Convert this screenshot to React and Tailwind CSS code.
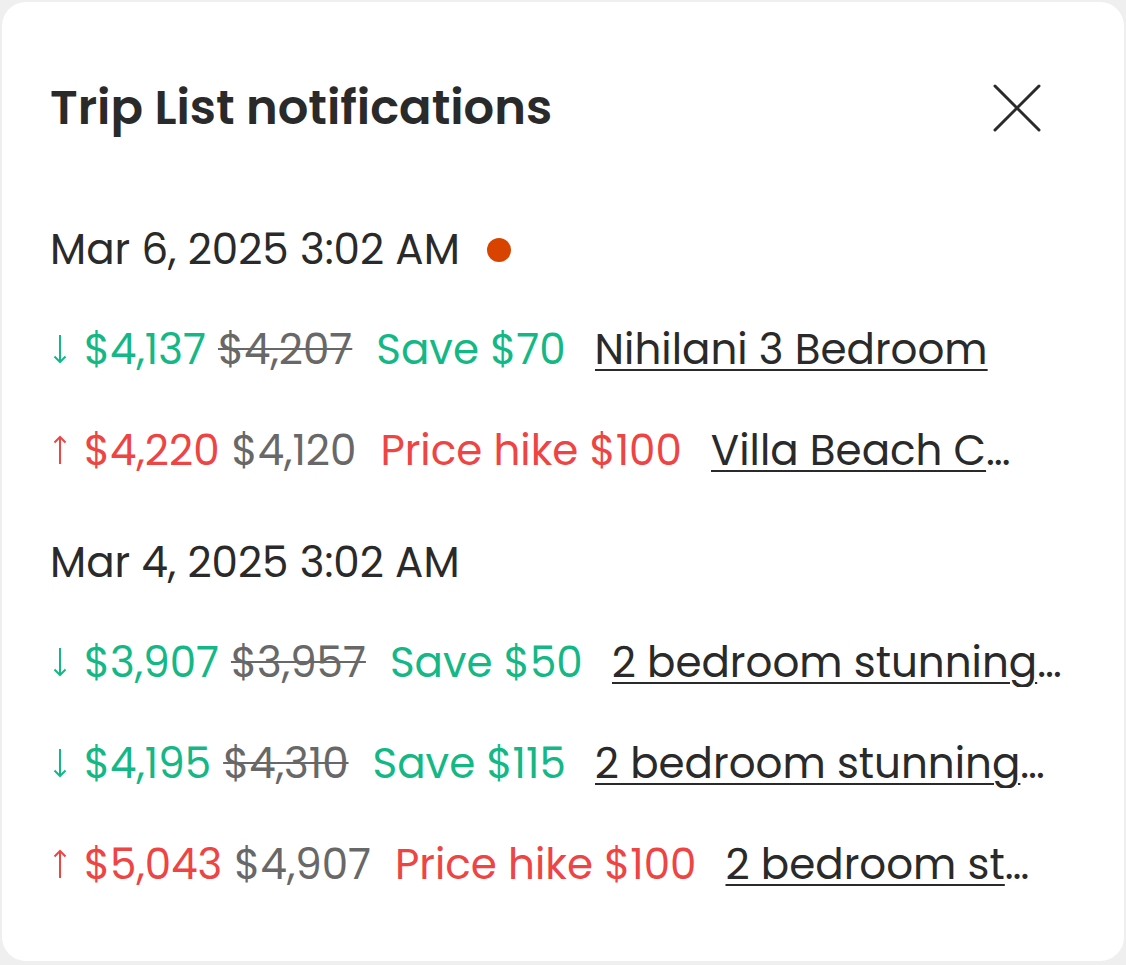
import React from "react";

const notifications = [
  {
    date: "Mar 6, 2025 3:02 AM",
    unread: true,
    items: [
      { dir: "down", price: "$4,137", was: "$4,207", note: "Save $70", name: "Nihilani 3 Bedroom", max: "" },
      { dir: "up", price: "$4,220", was: "$4,120", note: "Price hike $100", name: "Villa Beach Cottage", max: "max-w-[306px]" },
    ],
  },
  {
    date: "Mar 4, 2025 3:02 AM",
    unread: false,
    items: [
      { dir: "down", price: "$3,907", was: "$3,957", note: "Save $50", name: "2 bedroom stunning ocean view", max: "max-w-[456px]" },
      { dir: "down", price: "$4,195", was: "$4,310", note: "Save $115", name: "2 bedroom stunning ocean view", max: "max-w-[456px]" },
      { dir: "up", price: "$5,043", was: "$4,907", note: "Price hike $100", name: "2 bedroom stunning ocean view", max: "max-w-[306px]" },
    ],
  },
];

const Arrow = ({ down }) => (
  <svg width="14" height="30" viewBox="0 0 14 30" fill="none" stroke="currentColor" strokeWidth="2" className="self-center shrink-0">
    {down ? <path d="M7 1v27M1.5 22.5 7 28l5.5-5.5" /> : <path d="M7 29V2M1.5 7.5 7 2l5.5 5.5" />}
  </svg>
);

const PriceRow = ({ item }) => {
  const down = item.dir === "down";
  const tone = down ? "text-[#14b886]" : "text-[#ef4444]";
  return (
    <div className="flex items-baseline whitespace-nowrap text-[42px] leading-[48px]">
      <span className={`${tone} ml-[3px] mr-[17px] h-[48px] flex items-center pb-[4px]`}>
        <Arrow down={down} />
      </span>
      <span className={tone}>{item.price}</span>
      <span className={`ml-[12px] text-[#686868] ${down ? "line-through decoration-[2px]" : ""}`}>{item.was}</span>
      <span className={`ml-[24px] ${tone}`}>{item.note}</span>
      <a href="#" className={`ml-[29px] text-[#2a2a2a] underline decoration-[2px] underline-offset-[5px] truncate ${item.max}`}>
        {item.name}
      </a>
    </div>
  );
};

const App = () => {
  return (
    <div className="min-h-screen bg-[#efefef] p-[2px]" style={{ fontFamily: "Poppins, Inter, sans-serif" }}>
      <div className="bg-white rounded-[24px] h-[959px] pl-[48px] pr-[40px] pt-[78px]">
        <div className="flex items-center justify-between mr-[43px]">
          <h2 className="text-[48px] leading-[56px] font-semibold text-[#2a2a2a]">Trip List notifications</h2>
          <button className="w-[48px] h-[48px] flex items-center justify-center text-[#2a2a2a]">
            <svg width="48" height="48" viewBox="0 0 48 48" fill="none" stroke="currentColor" strokeWidth="3" strokeLinecap="round">
              <path d="M2 2 46 46M46 2 2 46" />
            </svg>
          </button>
        </div>

        <div className="mt-[90px] flex flex-col gap-[63px]">
          {notifications.map((group) => (
            <div key={group.date} className="flex flex-col gap-[52px]">
              <div className="flex items-center text-[42px] leading-[48px] text-[#2a2a2a]">
                <span>{group.date}</span>
                {group.unread && <span className="ml-[27px] w-[24px] h-[24px] rounded-full bg-[#d84300]" />}
              </div>
              {group.items.map((item, i) => (
                <PriceRow key={i} item={item} />
              ))}
            </div>
          ))}
        </div>
      </div>
    </div>
  );
};

export default App;
